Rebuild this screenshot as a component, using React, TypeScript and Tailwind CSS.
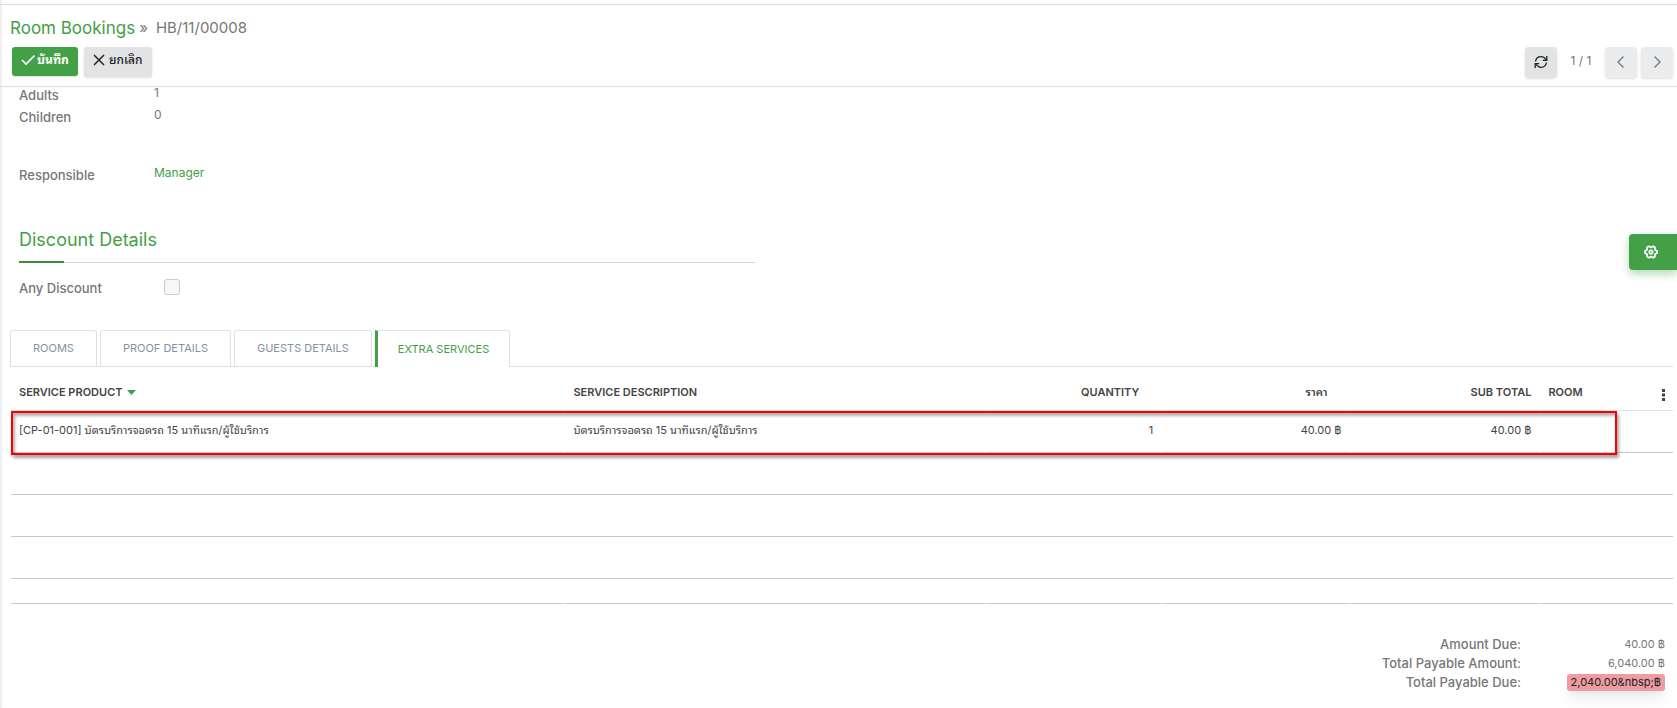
import type { ReactNode } from 'react';

const tabs = ['Rooms', 'Proof Details', 'Guests Details', 'Extra Services'];

const columns = [
  { label: 'Service Product', align: 'text-left', width: 'w-[33.4%]', sorted: true },
  { label: 'Service Description', align: 'text-left', width: 'w-[25.3%]' },
  { label: 'Quantity', align: 'text-right pr-[22px]', width: 'w-[10.6%]' },
  { label: 'ราคา', align: 'text-right pr-[22px]', width: 'w-[11.3%]' },
  { label: 'Sub Total', align: 'text-right', width: 'w-[11.4%]' },
];

const CheckIcon = () => (
  <svg className="h-3.5 w-3.5" viewBox="0 0 14 14" fill="none" stroke="currentColor" strokeWidth="1.6">
    <path d="M1 7l4 4 8.5-8.5" />
  </svg>
);

const CloseIcon = () => (
  <svg className="h-3 w-3" viewBox="0 0 12 12" fill="none" stroke="currentColor" strokeWidth="1.5">
    <path d="M1 1l10 10M11 1L1 11" />
  </svg>
);

const RefreshIcon = () => (
  <svg className="h-3.5 w-3.5" viewBox="0 0 14 14" fill="none" stroke="currentColor" strokeWidth="1.3">
    <path d="M1.500 6.500C2 3.500 4.300 1.700 7 1.700c2 0 3.700 1 4.800 2.800M12.800 1v4.300H8.800" />
    <path d="M12.500 7.500c-.5 3-2.800 4.800-5.500 4.800-2 0-3.700-1-4.800-2.800M1.200 13V8.700h4" />
  </svg>
);

const GearIcon = () => (
  <svg className="h-3.5 w-3.5" viewBox="0 0 14 14" fill="none" stroke="currentColor" strokeWidth="1.7" strokeLinejoin="round">
    <path d="M13 6v2l-2.100 1.300v2.400l-1.800 1L7 11.500l-2.100 1.200-1.800-1V9.300L1 8V6l2.100-1.300V2.300l1.800-1L7 2.500l2.100-1.200 1.800 1v2.400z" />
    <circle cx="7" cy="7" r="1.700" />
  </svg>
);

const Chevron = ({ d }: { d: string }) => (
  <svg className="h-3.5 w-3.5" viewBox="0 0 14 14" fill="none" stroke="currentColor" strokeWidth="1.3">
    <path d={d} />
  </svg>
);

const Field = ({ label, children }: { label: string; children: ReactNode }) => (
  <div className="flex h-4 text-[13px] leading-4">
    <dt className="w-[135px] font-medium text-[#777]">{label}</dt>
    <dd className="-mt-0.5 text-xs leading-4 text-[#777]">{children}</dd>
  </div>
);

const ControlPanel = () => (
  <header className="border-y border-[#dcdcdc] pl-[10px] pr-1 pt-[11px] pb-2">
    <nav className="flex items-center gap-1 text-[15px] leading-6 text-[#777]">
      <a href="#bookings" className="text-[17px] text-[#43a047]">Room Bookings</a>
      <span>»</span>
      <span className="pl-1">HB/11/00008</span>
    </nav>
    <div className="mt-[7px] flex items-start justify-between">
      <div className="flex gap-1.5 pl-0.5 text-xs">
        <button className="flex h-[29px] items-center gap-0.5 rounded-[3px] bg-[#43a047] px-[9px] pb-1 font-bold text-white shadow">
          <CheckIcon />
          บันทึก
        </button>
        <button className="flex h-[30px] items-center gap-1 rounded-[3px] bg-[#e2e3e5] px-[9px] pb-1 font-medium text-[#222] shadow">
          <CloseIcon />
          ยกเลิก
        </button>
      </div>
      <div className="flex items-center gap-1">
        <button aria-label="Refresh" className="flex h-[31px] w-8 items-center justify-center rounded bg-[#e2e3e5] pb-0.5 text-[#222] shadow">
          <RefreshIcon />
        </button>
        <span className="w-10 pb-1 text-center text-xs text-[#777]">1 / 1</span>
        <button aria-label="Previous" className="flex h-[31px] w-8 items-center justify-center rounded bg-[#ebecee] pb-0.5 text-[#777] shadow-sm">
          <Chevron d="M9.500 1.500L4 7l5.500 5.500" />
        </button>
        <button aria-label="Next" className="flex h-[31px] w-8 items-center justify-center rounded bg-[#ebecee] pb-0.5 text-[#777] shadow-sm">
          <Chevron d="M4.500 1.500L10 7l-5.500 5.500" />
        </button>
      </div>
    </div>
  </header>
);

const BookingDetails = () => (
  <section className="w-[45%] pl-[19px]">
    <dl>
      <Field label="Adults">1</Field>
      <div className="h-1.5" />
      <Field label="Children">0</Field>
      <div className="h-[42px]" />
      <Field label="Responsible">
        <a href="#manager" className="text-[#43a047]">Manager</a>
      </Field>
    </dl>
    <h2 className="relative mt-[45px] border-b border-[#d6d6d6] pb-2.5 text-lg leading-6 text-[#43a047]">
      Discount Details
      <span className="absolute -bottom-px left-0 h-0.5 w-[45px] bg-[#388e3c]" />
    </h2>
    <div className="mt-4 flex h-4 items-center">
      <label htmlFor="any-discount" className="w-[145px] pt-0.5 text-[13px] font-medium leading-4 text-[#777]">
        Any Discount
      </label>
      <input
        id="any-discount"
        type="checkbox"
        disabled
        className="h-4 w-4 appearance-none rounded-[3px] border border-[#ccc] bg-[#f8f8f8]"
      />
    </div>
  </section>
);

const Tabs = () => (
  <div role="tablist" className="ml-[10px] mr-1 mt-[35px] flex h-[37px] gap-[3px] border-b border-[#dee2e6] text-[11px]">
    {tabs.map((tab) => {
      const active = tab === 'Extra Services';
      return (
        <button
          key={tab}
          role="tab"
          aria-selected={active}
          className={
            active
              ? 'h-[37px] rounded-tr-[3px] border border-b-0 border-l-[3px] border-[#dee2e6] border-l-[#43a047] bg-white px-5 uppercase text-[#43a047]'
              : 'rounded-t-[3px] border border-b-0 border-[#dee2e6] px-[22px] uppercase text-[#8492a3]'
          }
        >
          {tab}
        </button>
      );
    })}
  </div>
);

const ServicesTable = () => (
  <div className="relative ml-[10px] mr-[3px]">
    <table className="w-full table-fixed border-separate border-spacing-x-px border-spacing-y-0 text-[11px] text-[#444]">
      <thead>
        <tr className="h-11 uppercase">
          {columns.map((col) => (
            <th key={col.label} className={`border-b border-[#dee2e6] px-2 pt-2 font-semibold ${col.align} ${col.width}`}>
              {col.label}
              {col.sorted && (
                <svg className="mb-0.5 ml-1 inline-block h-[5px] w-[9px] align-middle text-[#43a047]" viewBox="0 0 9 5" fill="currentColor">
                  <path d="M0 0h9L4.500 5z" />
                </svg>
              )}
            </th>
          ))}
          <th className="border-b border-[#dee2e6] px-2 pt-2 font-semibold">
            <div className="flex items-center justify-between">
              Room
              <button aria-label="Optional columns" className="pt-1">
                <svg className="h-3 w-[3px]" viewBox="0 0 3 12" fill="currentColor">
                  <path d="M0 0h3v3H0zM0 4.500h3v3H0zM0 9h3v3H0z" />
                </svg>
              </button>
            </div>
          </th>
        </tr>
      </thead>
      <tbody>
        <tr className="h-[42px] [&>td]:border-b [&>td]:border-[#c8c8c8] [&>td]:px-2 [&>td]:pb-0.5">
          <td>[CP-01-001] บัตรบริการจอดรถ 15 นาทีแรก/ผู้ใช้บริการ</td>
          <td>บัตรบริการจอดรถ 15 นาทีแรก/ผู้ใช้บริการ</td>
          <td className="text-right">1</td>
          <td className="text-right">40.00 ฿</td>
          <td className="text-right">40.00 ฿</td>
          <td />
        </tr>
        {[1, 2, 3].map((row) => (
          <tr key={row} className="h-[42px]">
            <td colSpan={6} className="border-b border-[#c8c8c8]" />
          </tr>
        ))}
      </tbody>
      <tfoot>
        <tr className="h-[25px] [&>td]:border-b [&>td]:border-[#c8c8c8]">
          <td />
          <td />
          <td />
          <td />
          <td />
          <td />
        </tr>
      </tfoot>
    </table>
    <div className="pointer-events-none absolute left-px right-[57px] top-11 h-11 border-2 border-[#f80000] shadow-[2px_3px_3px_rgba(0,0,0,0.35),inset_2px_3px_3px_rgba(0,0,0,0.3)]" />
  </div>
);

const Totals = () => (
  <dl className="mr-3 mt-[31px] grid grid-cols-[auto_144px] justify-end text-right text-[13px] leading-[19px] text-[#777]">
    <dt className="font-medium">Amount Due:</dt>
    <dd className="text-[11px] leading-[19px]">40.00 ฿</dd>
    <dt className="font-medium">Total Payable Amount:</dt>
    <dd className="text-[11px] leading-[19px]">6,040.00 ฿</dd>
    <dt className="font-medium">Total Payable Due:</dt>
    <dd className="flex items-center justify-end">
      <span className="rounded-[3px] bg-[#ee9ca2] px-1 text-[11px] leading-[17px] text-[#222] shadow-lg">
        {'2,040.00&nbsp;฿'}
      </span>
    </dd>
  </dl>
);

export default function App() {
  return (
    <div className="relative min-h-screen bg-white pt-1 font-['Inter','Noto_Sans_Thai_Looped','Loma','Waree','Garuda','Noto_Sans_Thai',sans-serif] shadow-[inset_3px_0_2px_-1px_#eeeeee]">
      <ControlPanel />
      <BookingDetails />
      <Tabs />
      <ServicesTable />
      <Totals />
      <button
        aria-label="Settings"
        className="absolute right-0 top-[234px] flex h-9 w-12 items-center rounded-l bg-[#43a047] pl-[15px] text-white shadow-[0_4px_8px_rgba(67,160,71,0.4)]"
      >
        <GearIcon />
      </button>
    </div>
  );
}
